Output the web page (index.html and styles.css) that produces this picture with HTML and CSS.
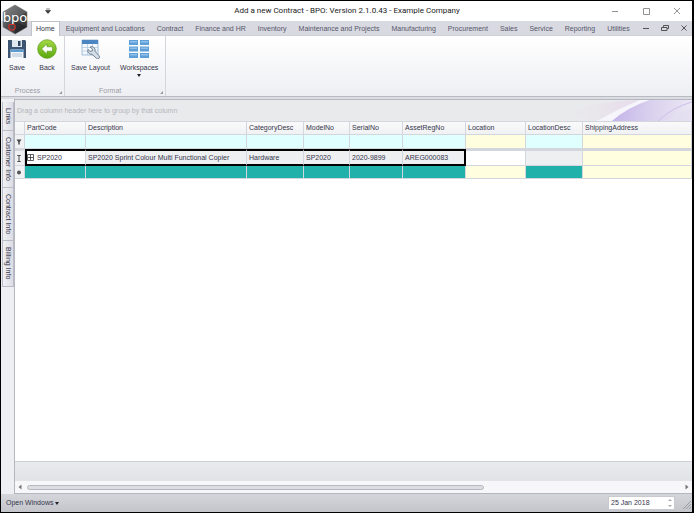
FILE: index.html
```html
<!DOCTYPE html>
<html lang="en">
<head>
    <meta charset="UTF-8">
    <meta name="viewport" content="width=device-width, initial-scale=1.0">
    <title>Add a new Contract - BPO</title>
    <link rel="stylesheet" href="styles.css">
</head>
<body>
    <header class="titlebar">
        <svg class="logo" viewBox="0 0 28 32" aria-hidden="true">
            <defs>
                <linearGradient id="hex" x1="0" y1="0" x2="1" y2="1">
                    <stop offset="0" stop-color="#8a8c8e"/>
                    <stop offset=".45" stop-color="#4d4f51"/>
                    <stop offset="1" stop-color="#26282a"/>
                </linearGradient>
            </defs>
            <path d="M14 2 26 9v15L14 31 2 24V9z" fill="url(#hex)" stroke="#777" stroke-width=".6"/>
            <path d="M14 2 26 9 14 15 2 9z" fill="#888" opacity=".35"/>
            <path d="M14 18 26 24 14 31z" fill="#111" opacity=".4"/>
            <text x="14" y="19" class="logo-text">bpo</text>
            <path d="M8.500 21.500h4.500l1 1v3l-1.500 1.500h-3L8 25.500v-3z" fill="none" stroke="#d3322f" stroke-width="1.200"/>
        </svg>
        <button class="quick" aria-label="Customize quick access">
            <svg viewBox="0 0 6 6"><path d="M1 1h4M.5 2.500h5L3 5.500z" stroke="#333" stroke-width=".6" fill="#333"/></svg>
        </button>
        <h1>Add a new Contract - BPO: Version 2.1.0.43 - Example Company</h1>
        <div class="window-buttons">
            <button aria-label="Minimize"><svg viewBox="0 0 8 8"><path d="M1 4.500h6"/></svg></button>
            <button aria-label="Maximize"><svg viewBox="0 0 8 8"><path d="M1.500 1.500h6v6h-6z"/></svg></button>
            <button aria-label="Close"><svg viewBox="0 0 8 8"><path d="M1 1l6 6M7 1 1 7"/></svg></button>
        </div>
    </header>

    <nav class="tabs">
        <button class="tab active">Home</button>
        <button class="tab">Equipment and Locations</button>
        <button class="tab">Contract</button>
        <button class="tab">Finance and HR</button>
        <button class="tab">Inventory</button>
        <button class="tab">Maintenance and Projects</button>
        <button class="tab">Manufacturing</button>
        <button class="tab">Procurement</button>
        <button class="tab">Sales</button>
        <button class="tab">Service</button>
        <button class="tab">Reporting</button>
        <button class="tab">Utilities</button>
        <div class="mdi-buttons">
            <button aria-label="Minimize window"><svg viewBox="0 0 8 8"><path d="M1 4.500h6"/></svg></button>
            <button aria-label="Restore window"><svg viewBox="0 0 8 8"><path d="M2.500 3V1.500h5v3H6M.5 3.500H6v3H.5z"/></svg></button>
            <button aria-label="Close window"><svg viewBox="0 0 8 8"><path d="M1.500 1.500l5 5M6.500 1.500l-5 5"/></svg></button>
        </div>
    </nav>

    <section class="ribbon">
        <div class="group">
            <div class="group-items">
                <button class="tool">
                    <svg viewBox="0 0 20 20">
                        <path d="M1 1h17l1 1v17H1z" fill="#3c5573"/>
                        <path d="M5 1h10v7H5z" fill="#dfe7ef"/>
                        <path d="M11 2h2.500v5H11z" fill="#2f455f"/>
                        <path d="M3.500 10.500h13V19h-13z" fill="#f4f7fa"/>
                        <path d="M3.500 10.500h13V13h-13z" fill="#5b9bd0"/>
                        <path d="M5 15h10M5 17h10" stroke="#9fb3c6" stroke-width=".8"/>
                    </svg>
                    Save
                </button>
                <button class="tool">
                    <svg viewBox="0 0 20 20">
                        <defs>
                            <linearGradient id="green" x1="0" y1="0" x2="0" y2="1">
                                <stop offset="0" stop-color="#a5d944"/>
                                <stop offset="1" stop-color="#5aa80e"/>
                            </linearGradient>
                        </defs>
                        <circle cx="10" cy="10" r="9.300" fill="url(#green)" stroke="#5c9c1b" stroke-width=".7"/>
                        <path d="M4.500 10 10 4.800v3h5.500v4.400H10v3z" fill="#fff" stroke="#4f9312" stroke-width=".6"/>
                    </svg>
                    Back
                </button>
            </div>
            <div class="group-title">Process<span class="launcher"></span></div>
        </div>
        <div class="group">
            <div class="group-items">
                <button class="tool">
                    <svg viewBox="0 0 20 20">
                        <path d="M2 1h16v15H2z" fill="#f4f8fc" stroke="#7fa6cc" stroke-width=".7"/>
                        <path d="M2 1h16v4H2z" fill="#4b86c2"/>
                        <path d="M7.500 5v11M12.500 5v11M2 8.500h16M2 12h16" stroke="#a9c5df" stroke-width=".7"/>
                        <path d="M10 8a3.600 3.600 0 0 1 5 4.300l4 4.500a1.700 1.700 0 0 1-2.500 2.500l-4.500-4A3.600 3.600 0 0 1 8 10.500l2.300 2 1.900-.5.300-1.800z" fill="#d5dde6" stroke="#66788c" stroke-width=".9"/>
                    </svg>
                    Save Layout
                </button>
                <button class="tool">
                    <svg viewBox="0 0 20 20">
                        <path d="M0 1h9v5H0zM11 1h9v5h-9zM0 7.500h9v5H0zM11 7.500h9v5h-9zM0 14h9v5H0zM11 14h9v5h-9z" fill="#5f9fd8"/>
                        <path d="M1 2h7v1.500H1zM12 2h7v1.500h-7zM1 8.500h7V10H1zM12 8.500h7V10h-7zM1 15h7v1.500H1zM12 15h7v1.500h-7z" fill="#8fc0ea"/>
                    </svg>
                    Workspaces
                    <span class="caret"></span>
                </button>
            </div>
            <div class="group-title">Format<span class="launcher"></span></div>
        </div>
    </section>

    <main class="workspace">
        <aside class="side-tabs">
            <button>Links</button>
            <button>Customer Info</button>
            <button>Contract Info</button>
            <button>Billing Info</button>
        </aside>

        <div class="grid">
            <div class="group-panel">
                <span>Drag a column header here to group by that column</span>
                <svg viewBox="0 0 120 22" preserveAspectRatio="none" aria-hidden="true">
                    <defs>
                        <linearGradient id="swoosh" x1="0" y1="0" x2="1" y2="0">
                            <stop offset="0" stop-color="#bba9e8"/>
                            <stop offset=".5" stop-color="#d6cbef"/>
                            <stop offset="1" stop-color="#ebe7f5"/>
                        </linearGradient>
                        <linearGradient id="pink" x1="0" y1="0" x2="1" y2="0">
                            <stop offset="0" stop-color="#e9d3ea" stop-opacity="0"/>
                            <stop offset="1" stop-color="#e4cdeb"/>
                        </linearGradient>
                    </defs>
                    <path d="M0 10Q30 0 80 0L45 22H10z" fill="url(#pink)" opacity=".6"/>
                    <path d="M40 22Q55 8 78 0H68Q45 10 25 22z" fill="#f6f5fb"/>
                    <path d="M40 22Q55 8 78 0H120V22z" fill="url(#swoosh)" opacity=".8"/>
                    <path d="M86 22Q100 8 120 2" fill="none" stroke="#cbbdec"/>
                    <path d="M92 22 120 8V22z" fill="#e2deef" opacity=".7"/>
                </svg>
            </div>
            <table>
                <colgroup>
                    <col class="c-mark"><col class="c-part"><col class="c-desc"><col class="c-cat"><col class="c-model">
                    <col class="c-serial"><col class="c-asset"><col class="c-loc"><col class="c-locdesc"><col>
                </colgroup>
                <thead>
                    <tr>
                        <th></th>
                        <th>PartCode</th>
                        <th>Description</th>
                        <th>CategoryDesc</th>
                        <th>ModelNo</th>
                        <th>SerialNo</th>
                        <th>AssetRegNo</th>
                        <th>Location</th>
                        <th>LocationDesc</th>
                        <th>ShippingAddress</th>
                    </tr>
                </thead>
                <tbody>
                    <tr class="filter">
                        <td class="mark"><svg viewBox="0 0 6 6"><path d="M.5 1h5L3.700 3.500V6H2.300V3.500z" fill="#444"/></svg></td>
                        <td></td><td></td><td></td><td></td><td></td><td></td>
                        <td class="required"></td><td></td><td class="required"></td>
                    </tr>
                    <tr class="current">
                        <td class="mark"><svg viewBox="0 0 6 8"><path d="M1 .5h4M3 .5v7M1 7.500h4" stroke="#333" fill="none"/></svg></td>
                        <td class="boxed first"><button class="expand" aria-label="Expand row"><svg viewBox="0 0 7 7"><path d="M.5.5h6v6h-6zM1 3.500h5M3.500 1v5" stroke="#333" stroke-width=".8" fill="none"/></svg></button>SP2020</td>
                        <td class="boxed">SP2020 Sprint Colour Multi Functional Copier</td>
                        <td class="boxed">Hardware</td>
                        <td class="boxed">SP2020</td>
                        <td class="boxed">2020-9899</td>
                        <td class="boxed last">AREG000083</td>
                        <td class="editable"></td><td></td><td class="required"></td>
                    </tr>
                    <tr class="new">
                        <td class="mark"><svg viewBox="0 0 6 6"><circle cx="3" cy="3" r="2" fill="#555"/></svg></td>
                        <td></td><td></td><td></td><td></td><td></td><td></td>
                        <td class="required"></td><td></td><td class="required"></td>
                    </tr>
                </tbody>
            </table>
            <div class="grid-footer"></div>
            <div class="scrollbar">
                <button aria-label="Scroll left"><svg viewBox="0 0 4 6"><path d="M3.500.5v5L.5 3z"/></svg></button>
                <div class="track"><div class="thumb"></div></div>
                <button aria-label="Scroll right"><svg viewBox="0 0 4 6"><path d="M.5.5v5l3-2.500z"/></svg></button>
            </div>
        </div>
    </main>

    <footer class="statusbar">
        <button class="open-windows">Open Windows <span class="caret"></span></button>
        <div class="date">
            <input type="text" value="25 Jan 2018" aria-label="Date">
            <svg viewBox="0 0 4 10"><path d="M0 3 2 1l2 2zM0 7l2 2 2-2z" fill="#aaa"/></svg>
        </div>
        <svg class="grip" viewBox="0 0 8 8"><path d="M0 8 8 0M3 8l5-5M6 8l2-2" stroke="#9a9ca3"/></svg>
    </footer>
</body>
</html>
```
FILE: styles.css
```css
* {
    box-sizing: border-box;
}
body {
    margin: 0;
    height: 100vh;
    display: flex;
    flex-direction: column;
    border: 1px solid #000;
    border-right-width: 2px;
    background-color: #fff;
    color: #35354a;
    font-family: "Liberation Sans", Arial, sans-serif;
    font-size: 7px;
    line-height: 10px;
    overflow: hidden;
}
button {
    border: none;
    padding: 0;
    background: none;
    color: inherit;
    font: inherit;
    cursor: pointer;
}
svg {
    display: block;
}

/* title bar */
.titlebar {
    position: relative;
    height: 20px;
    flex: none;
    display: flex;
    align-items: center;
    justify-content: flex-end;
}
.titlebar h1 {
    flex: 1;
    margin: 0;
    padding-left: 32px;
    text-align: center;
    font-family: Roboto, sans-serif;
    font-size: 8px;
    font-weight: normal;
    color: #222;
}
.logo {
    position: absolute;
    left: 0;
    top: 2px;
    width: 28px;
    height: 32px;
}
.logo-text {
    fill: #fff;
    font-family: "DejaVu Sans", sans-serif;
    font-size: 13px;
    text-anchor: middle;
}
.quick {
    margin-left: 44px;
}
.quick svg {
    width: 6px;
    height: 6px;
}
.window-buttons {
    display: flex;
    gap: 23px;
    padding-right: 11px;
}
.window-buttons svg,
.mdi-buttons svg {
    width: 8px;
    height: 8px;
    fill: none;
    stroke: #777;
    stroke-width: 0.8;
}

/* ribbon tabs */
.tabs {
    height: 15px;
    flex: none;
    display: flex;
    padding-left: 30px;
    background-color: #d9dae1;
    border-bottom: 1px solid #cfd0d8;
    color: #55566a;
}
.tab {
    padding: 1px 6px 0;
    white-space: nowrap;
}
.tab.active {
    height: 15px;
    padding: 0 4px;
    background-color: #fff;
    border: 1px solid #c0c2cc;
    border-bottom: none;
    color: #35354a;
}
.mdi-buttons {
    margin-left: auto;
    display: flex;
    align-items: center;
    gap: 11px;
    padding-right: 4px;
}
.mdi-buttons svg {
    stroke: #555;
    stroke-width: 1;
}

/* ribbon */
.ribbon {
    height: 61px;
    flex: none;
    display: flex;
    background: linear-gradient(#fff, #eeeff3);
    border-bottom: 1px solid #b9bbc3;
}
.group {
    display: flex;
    flex-direction: column;
    justify-content: space-between;
    border-right: 1px solid #d4d6dc;
}
.group-items {
    display: flex;
    gap: 10px;
    padding: 3px 7px 0 6px;
}
.tool {
    display: flex;
    flex-direction: column;
    align-items: center;
    min-width: 20px;
}
.tool svg {
    width: 20px;
    height: 20px;
    margin-bottom: 4px;
}
.caret {
    display: inline-block;
    border: 2px solid transparent;
    border-top: 3px solid #222;
    border-bottom: none;
}
.tool .caret {
    margin-top: 1px;
}
.group-title {
    position: relative;
    padding-right: 10px;
    text-align: center;
    color: #9a9ba5;
}
.launcher {
    position: absolute;
    right: 2px;
    bottom: 2px;
    border-left: 3px solid transparent;
    border-bottom: 3px solid #9a9ba5;
}

/* workspace */
.workspace {
    flex: 1;
    min-height: 0;
    display: flex;
    padding-top: 2px;
    background-color: #dcdde2;
}
.side-tabs {
    width: 13px;
    flex: none;
    display: flex;
    flex-direction: column;
    padding: 3px 0 0 1px;
    background-color: #eeeff2;
}
.side-tabs button {
    writing-mode: vertical-rl;
    padding: 6px 0;
    border: 1px solid #b9bbc6;
    border-top: none;
    background: linear-gradient(90deg, #f0f1f4, #dcdde4);
}
.grid {
    flex: 1;
    min-width: 0;
    display: flex;
    flex-direction: column;
    background-color: #fff;
    border: 1px solid #b4b6c0;
    border-right: none;
}
.group-panel {
    height: 21px;
    flex: none;
    display: flex;
    align-items: center;
    justify-content: space-between;
    padding-left: 2px;
    background-color: #e9eaec;
    color: #b4b6bd;
}
.group-panel svg {
    width: 120px;
    height: 21px;
}

/* data grid */
table {
    width: 100%;
    table-layout: fixed;
    border-collapse: separate;
    border-spacing: 0;
}
.c-mark { width: 10px; }
.c-part { width: 61px; }
.c-desc { width: 161px; }
.c-cat { width: 57px; }
.c-model { width: 46px; }
.c-serial { width: 53px; }
.c-asset { width: 63px; }
.c-loc { width: 60px; }
.c-locdesc { width: 57px; }
th,
td {
    height: 14px;
    padding: 0 2px;
    border-right: 1px solid #d3d6dc;
    border-bottom: 1px solid #d3d6dc;
    white-space: nowrap;
    text-align: left;
    font-weight: normal;
}
th {
    background: linear-gradient(#fafafb, #f0f1f3);
    border-top: 1px solid #d3d6dc;
}
.filter td {
    background-color: #e0ffff;
}
.current td {
    height: 17px;
    background-color: #eeeff1;
    border-top: 2px solid #d3d6dc;
}
.current .boxed {
    border-top: 2px solid #000;
    border-bottom: 2px solid #000;
}
.current .first {
    border-left: 2px solid #000;
    background-color: #fff;
    padding-left: 0;
}
.current .last {
    border-right: 2px solid #000;
}
.current .editable {
    background-color: #fff;
}
.new td {
    height: 13px;
    background-color: #20b2aa;
}
tbody td.required {
    background-color: #ffffe0;
}
tbody td.mark {
    padding: 0 1px;
    background-color: #f0f1f3;
}
.mark svg {
    width: 6px;
    height: 7px;
}
.expand {
    margin-right: 3px;
    vertical-align: middle;
}
.expand svg {
    width: 7px;
    height: 7px;
}
.grid-footer {
    height: 20px;
    flex: none;
    margin-top: auto;
    border-top: 1px solid #cfd1d7;
    background: linear-gradient(#e9eaed, #e2e3e7);
}
.scrollbar {
    height: 12px;
    flex: none;
    display: flex;
    align-items: center;
    gap: 5px;
    padding: 0 3px;
    background-color: #f7f7f9;
}
.scrollbar svg {
    width: 4px;
    height: 6px;
    fill: #777;
}
.track {
    flex: 1;
}
.thumb {
    width: 70%;
    height: 5px;
    border: 1px solid #b7b9c0;
    border-radius: 3px;
    background-color: #dcdde2;
}

/* status bar */
.statusbar {
    height: 18px;
    flex: none;
    display: flex;
    align-items: center;
    background: linear-gradient(#d5d6db, #c3c5cb);
}
.open-windows {
    padding-left: 5px;
}
.open-windows .caret {
    vertical-align: middle;
}
.date {
    width: 67px;
    height: 14px;
    margin-left: auto;
    display: flex;
    align-items: center;
    padding: 0 2px;
    border: 1px solid #c9cad0;
    background-color: #fff;
}
.date input {
    flex: 1;
    min-width: 0;
    padding: 0;
    border: none;
    background: none;
    color: inherit;
    font: inherit;
}
.date svg {
    width: 4px;
    height: 10px;
}
.grip {
    width: 8px;
    height: 8px;
    margin: 4px 1px 0 8px;
}
```
